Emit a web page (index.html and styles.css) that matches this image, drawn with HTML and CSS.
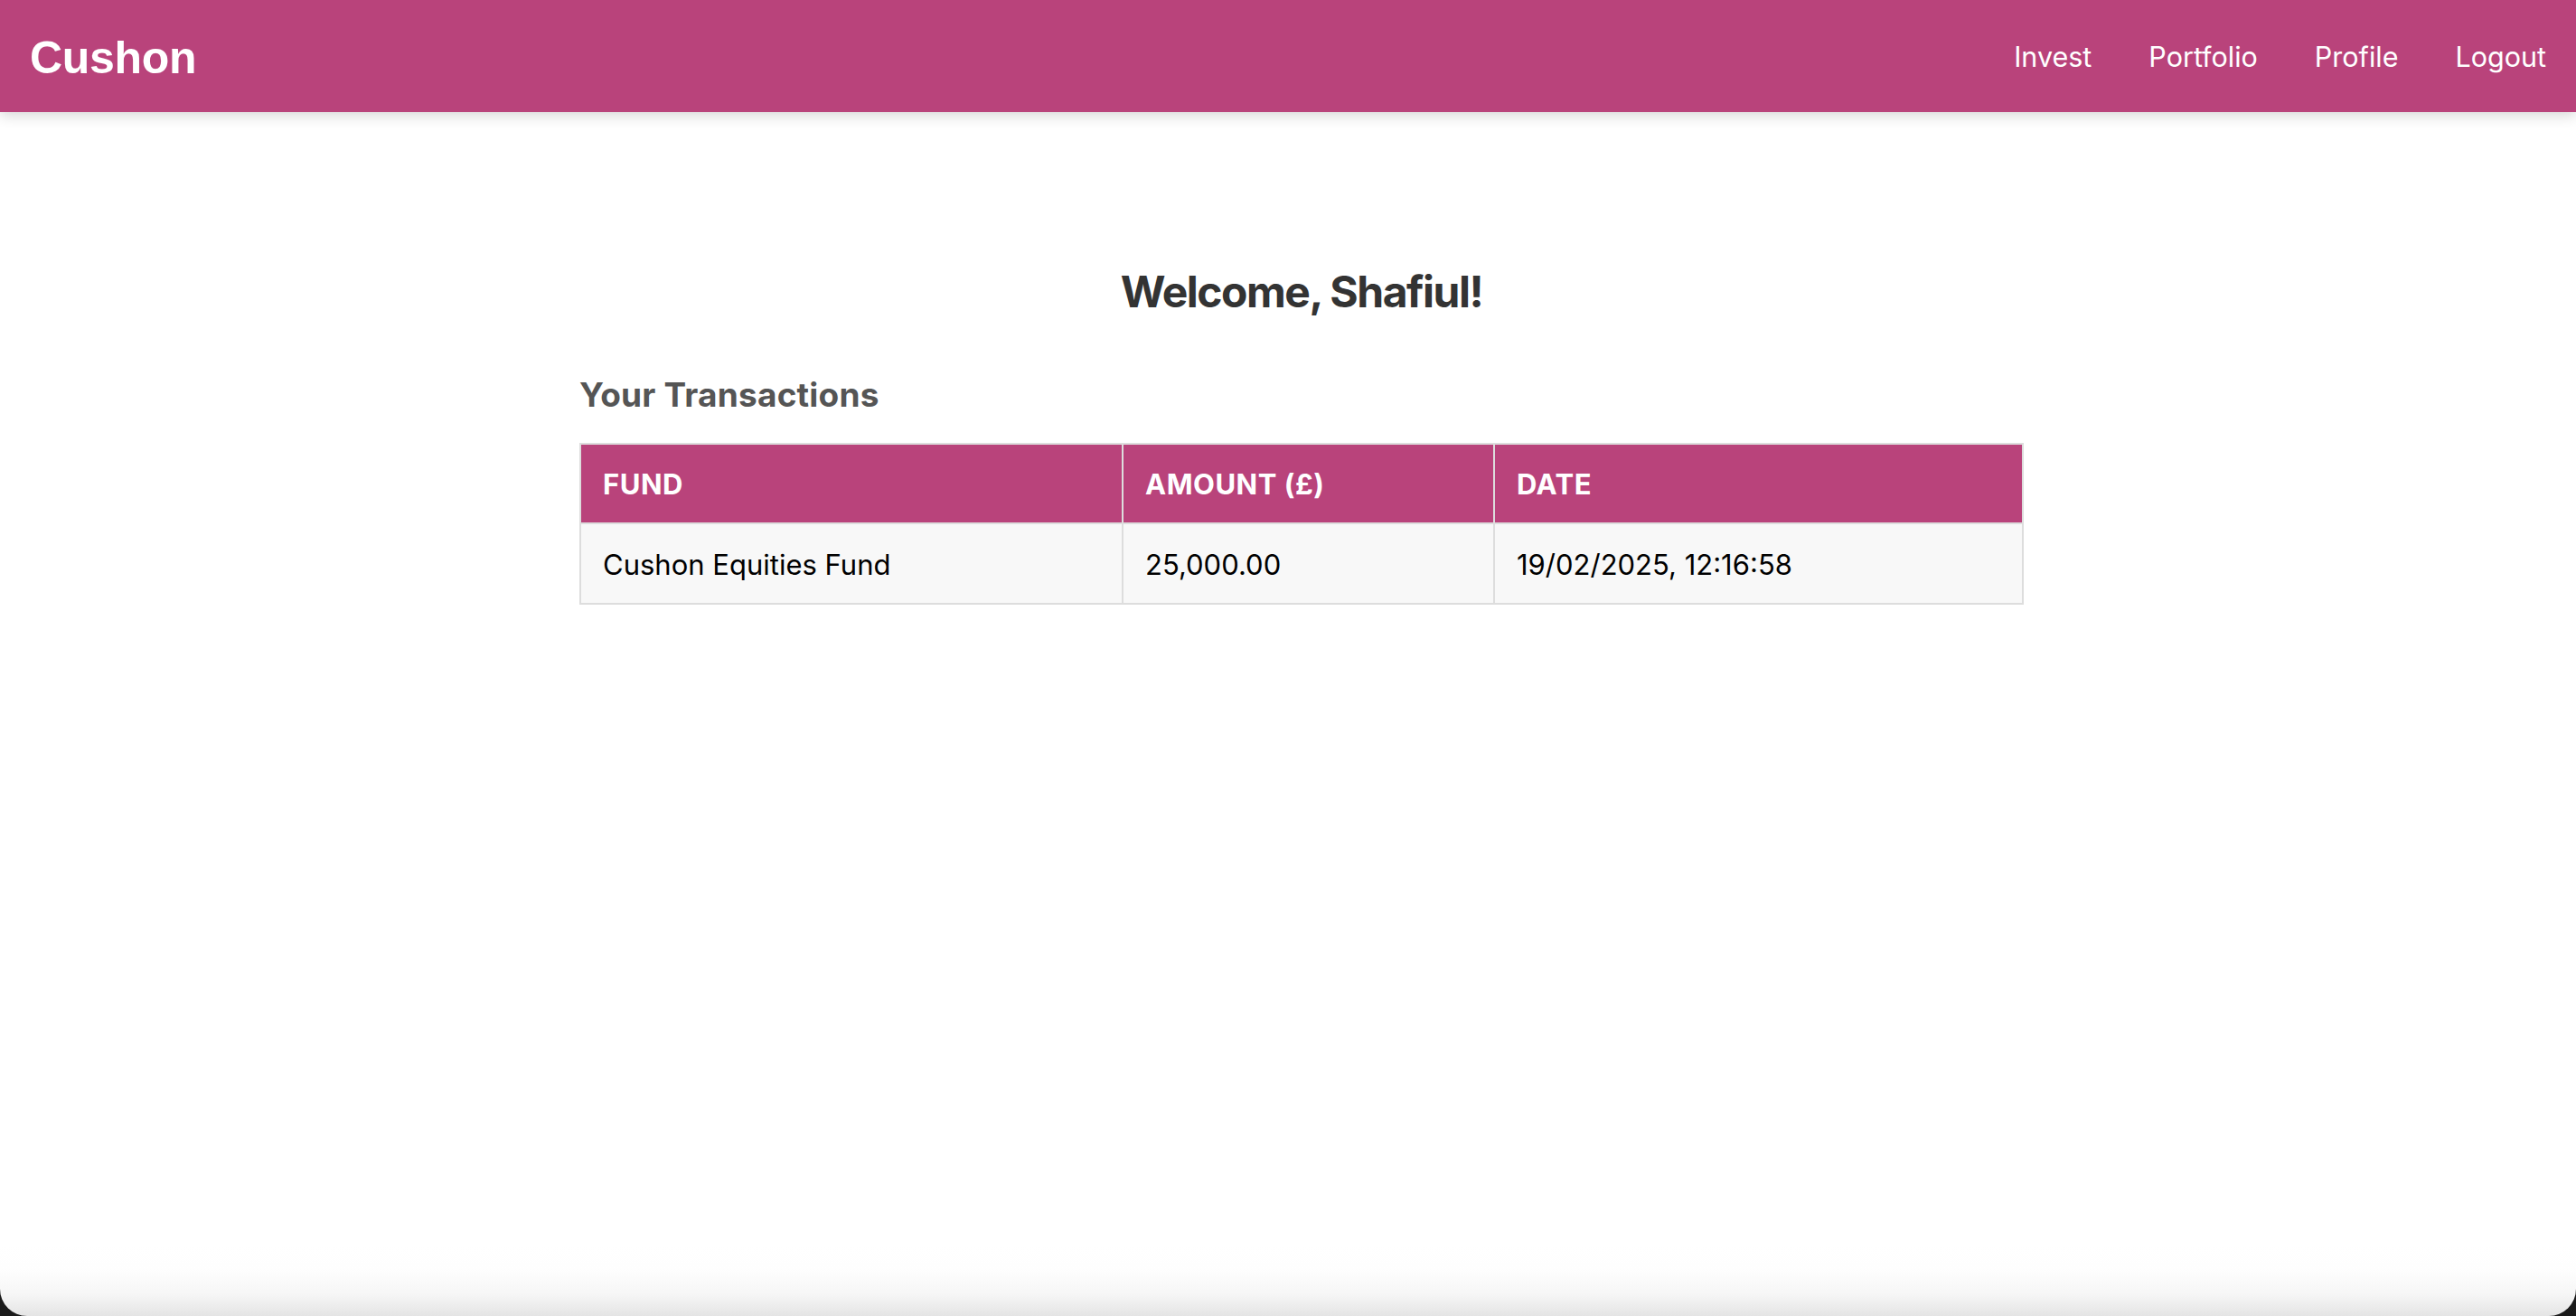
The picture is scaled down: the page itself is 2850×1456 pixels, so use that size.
FILE: index.html
```html
<!DOCTYPE html>
<html lang="en">
<head>
<meta charset="utf-8">
<title>Cushon</title>
<link rel="stylesheet" href="styles.css">
</head>
<body>
  <header class="navbar">
    <div class="brand">Cushon</div>
    <nav class="nav-links">
      <a class="nav-link" href="#">Invest</a>
      <a class="nav-link" href="#">Portfolio</a>
      <a class="nav-link" href="#">Profile</a>
      <a class="nav-link" href="#">Logout</a>
    </nav>
  </header>
  <main class="main">
    <div class="container">
      <h1 class="welcome">Welcome, Shafiul!</h1>
      <h2 class="section-title">Your Transactions</h2>
      <table class="tx-table">
        <thead>
          <tr>
            <th class="col-fund">FUND</th>
            <th class="col-amount">AMOUNT (£)</th>
            <th class="col-date">DATE</th>
          </tr>
        </thead>
        <tbody>
          <tr>
            <td>Cushon Equities Fund</td>
            <td>25,000.00</td>
            <td>19/02/2025, 12:16:58</td>
          </tr>
        </tbody>
      </table>
    </div>
  </main>
  <div class="window-edge"><div class="window-edge-inner"></div></div>
</body>
</html>
```

FILE: styles.css
```css
* { box-sizing: border-box; }

html, body {
  margin: 0;
  padding: 0;
  height: 100%;
}

body {
  display: flex;
  flex-direction: column;
  min-height: 100vh;
  background: #ffffff;
  font-family: "Inter", "Noto Sans", sans-serif;
  overflow: hidden;
}

.navbar {
  flex: 0 0 124px;
  height: 124px;
  background: #b9437b;
  display: flex;
  align-items: center;
  justify-content: space-between;
  padding: 0 33px 0 33px;
  box-shadow: 0 4px 14px rgba(0, 0, 0, 0.16);
  position: relative;
  z-index: 2;
}

.brand {
  font-family: "Liberation Sans", Arial, sans-serif;
  font-weight: 700;
  font-size: 50px;
  color: #ffffff;
  letter-spacing: -0.3px;
  padding-top: 4px;
}

.nav-links {
  display: flex;
  align-items: center;
  gap: 63px;
}

.nav-link {
  color: #ffffff;
  text-decoration: none;
  font-size: 30.5px;
  font-weight: 400;
  letter-spacing: 0;
}

.main {
  flex: 1 1 auto;
  padding: 170px 0 0 30px;
}

.container {
  width: 1598px;
  margin: 0 auto;
}

.welcome {
  margin: 0;
  text-align: center;
  font-size: 48px;
  line-height: 1.2;
  font-weight: 700;
  color: #333333;
  letter-spacing: -1.5px;
}

.section-title {
  margin: 63px 0 32px 0;
  font-size: 37px;
  line-height: 1.17;
  font-weight: 700;
  color: #555555;
  letter-spacing: 0.2px;
}

.tx-table {
  width: 100%;
  border-collapse: collapse;
  border: 2px solid #dddddd;
}

.tx-table th,
.tx-table td {
  border: 2px solid #dddddd;
  padding: 24px 24px;
  text-align: left;
}

.tx-table th {
  background: #b9437b;
  color: #ffffff;
  font-size: 31px;
  font-weight: 700;
  line-height: 1.2;
  letter-spacing: 0.5px;
  padding-top: 25px;
  padding-bottom: 24px;
}

.tx-table td {
  background: #f8f8f8;
  color: #000000;
  font-size: 31px;
  font-weight: 400;
  line-height: 1.25;
  padding-top: 26px;
  padding-bottom: 22px;
}

.col-fund { width: 600px; }
.col-amount { width: 411px; }

.window-edge {
  flex: 0 0 80px;
  height: 80px;
  background: #1a1a1a;
}

.window-edge-inner {
  height: 100%;
  background: linear-gradient(to bottom, #ffffff 0%, #fefefe 35%, #f6f6f6 70%, #e4e4e4 100%);
  border-radius: 0 0 30px 30px;
}
```
